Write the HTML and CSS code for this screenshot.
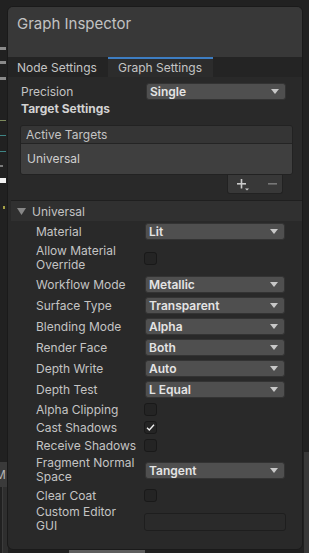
FILE: index.html
```html
<!DOCTYPE html>
<html>
<head>
<meta charset="utf-8">
<title>Graph Inspector</title>
<link rel="stylesheet" href="styles.css">
</head>
<body>
  <div class="graph-bits">
    <span class="bit bit-a"></span>
    <span class="bit bit-b"></span>
    <span class="bit bit-c"></span>
    <span class="bit bit-olive"></span>
    <span class="bit bit-teal1"></span>
    <span class="bit bit-teal2"></span>
    <span class="bit bit-d"></span>
    <span class="bit bit-white"></span>
    <span class="bit bit-yellow"></span>
    <span class="bit node-m">M</span>
    <span class="bit node-col"></span>
    <span class="bit node-right"></span>
    <span class="bit node-bottom"></span>
  </div>

  <div class="inspector">
    <div class="inspector-title">Graph Inspector</div>

    <div class="tabs">
      <div class="tab tab-node">Node Settings</div>
      <div class="tab tab-graph on">Graph Settings</div>
    </div>

    <div class="content">
      <div class="row row-top">
        <div class="label">Precision</div>
        <div class="popup"><span>Single</span><svg class="arrow" width="8" height="5" viewBox="0 0 8 5"><polygon points="0,0 8,0 4,5"/></svg></div>
      </div>
      <div class="heading">Target Settings</div>

      <div class="list">
        <div class="list-head">Active Targets</div>
        <div class="list-item">Universal</div>
      </div>
      <div class="list-foot">
        <svg class="btn-add" width="14" height="12" viewBox="0 0 14 12">
          <rect x="0" y="4" width="9" height="1.6"/>
          <rect x="3.7" y="0" width="1.6" height="9.5"/>
          <polygon points="8,9.5 12,9.5 10,11.5"/>
        </svg>
        <svg class="btn-remove" width="9" height="2" viewBox="0 0 9 2"><rect x="0" y="0" width="9" height="1.6"/></svg>
      </div>

      <div class="foldout">
        <div class="foldout-head">
          <svg class="fold-arrow" width="9" height="7" viewBox="0 0 9 7"><polygon points="0,0 9,0 4.5,7"/></svg>
          Universal
        </div>
        <div class="foldout-body">
          <div class="row">
            <div class="label">Material</div>
            <div class="popup"><span>Lit</span><svg class="arrow" width="8" height="5" viewBox="0 0 8 5"><polygon points="0,0 8,0 4,5"/></svg></div>
          </div>
          <div class="row row-tall">
            <div class="label">Allow Material<br>Override</div>
            <div class="check"></div>
          </div>
          <div class="row">
            <div class="label">Workflow Mode</div>
            <div class="popup"><span>Metallic</span><svg class="arrow" width="8" height="5" viewBox="0 0 8 5"><polygon points="0,0 8,0 4,5"/></svg></div>
          </div>
          <div class="row">
            <div class="label">Surface Type</div>
            <div class="popup"><span>Transparent</span><svg class="arrow" width="8" height="5" viewBox="0 0 8 5"><polygon points="0,0 8,0 4,5"/></svg></div>
          </div>
          <div class="row">
            <div class="label">Blending Mode</div>
            <div class="popup"><span>Alpha</span><svg class="arrow" width="8" height="5" viewBox="0 0 8 5"><polygon points="0,0 8,0 4,5"/></svg></div>
          </div>
          <div class="row">
            <div class="label">Render Face</div>
            <div class="popup"><span>Both</span><svg class="arrow" width="8" height="5" viewBox="0 0 8 5"><polygon points="0,0 8,0 4,5"/></svg></div>
          </div>
          <div class="row">
            <div class="label">Depth Write</div>
            <div class="popup"><span>Auto</span><svg class="arrow" width="8" height="5" viewBox="0 0 8 5"><polygon points="0,0 8,0 4,5"/></svg></div>
          </div>
          <div class="row">
            <div class="label">Depth Test</div>
            <div class="popup"><span>L Equal</span><svg class="arrow" width="8" height="5" viewBox="0 0 8 5"><polygon points="0,0 8,0 4,5"/></svg></div>
          </div>
          <div class="row row-check">
            <div class="label">Alpha Clipping</div>
            <div class="check"></div>
          </div>
          <div class="row row-check">
            <div class="label">Cast Shadows</div>
            <div class="check"><svg width="11" height="11" viewBox="0 0 11 11"><polyline points="2,5.8 4.3,8 9,2.8"/></svg></div>
          </div>
          <div class="row row-check">
            <div class="label">Receive Shadows</div>
            <div class="check"></div>
          </div>
          <div class="row row-tall">
            <div class="label">Fragment Normal<br>Space</div>
            <div class="popup"><span>Tangent</span><svg class="arrow" width="8" height="5" viewBox="0 0 8 5"><polygon points="0,0 8,0 4,5"/></svg></div>
          </div>
          <div class="row row-check">
            <div class="label">Clear Coat</div>
            <div class="check"></div>
          </div>
          <div class="row row-tall row-field">
            <div class="label">Custom Editor<br>GUI</div>
            <div class="field"></div>
          </div>
        </div>
      </div>
    </div>
  </div>
</body>
</html>
```

FILE: styles.css
```css
body
{
	margin: 0;
	padding: 6px 0 0 7px;
	background: #212121;
	font-family: Inter, "Noto Sans", "Liberation Sans", sans-serif;
	font-size: 12px;
	color: #c4c4c4;
}

/* bits of the shader graph behind the window */
.graph-bits
{
	position: absolute;
	left: 0;
	top: 0;
	width: 309px;
	height: 553px;
	overflow: hidden;
}
.bit
{
	position: absolute;
	display: block;
}
.bit-a { left: 0; top: 47px; width: 6px; height: 3px; background: #8a8a8a; }
.bit-b { left: 0; top: 61px; width: 6px; height: 3px; background: #8a8a8a; }
.bit-c { left: 0; top: 77px; width: 6px; height: 3px; background: #8a8a8a; }
.bit-olive { left: 0; top: 120px; width: 6px; height: 1px; background: #7d8a5c; }
.bit-teal1 { left: 0; top: 135px; width: 6px; height: 1px; background: #3e8585; }
.bit-teal2 { left: 0; top: 151px; width: 6px; height: 1px; background: #3e8585; }
.bit-d { left: 0; top: 165px; width: 3px; height: 2px; background: #7a7a7a; }
.bit-white { left: 0; top: 178px; width: 6px; height: 5px; background: #f2f2f2; }
.bit-yellow { left: 3px; top: 206px; width: 2px; height: 3px; background: #a5a046; }
.node-m
{
	left: 0;
	top: 462px;
	width: 7px;
	height: 25px;
	background: #3a3a3a;
	color: #b4b4b4;
	font-size: 12px;
	line-height: 25px;
	text-indent: -5px;
	overflow: hidden;
}
.node-col { left: 2px; top: 487px; width: 5px; height: 66px; background: #2e2e2e; border-left: 1px solid #3c3c3c; }
.node-right { left: 304px; top: 452px; width: 5px; height: 101px; background: #383838; }
.node-bottom { left: 69px; top: 550px; width: 76px; height: 3px; background: #5e5e5e; }

.inspector
{
	position: relative;
	box-sizing: border-box;
	width: 296px;
	height: 544px;
	border: 1px solid #1a1a1a;
	border-radius: 6px;
	overflow: hidden;
	background: #292929;
}

.inspector-title
{
	height: 50px;
	box-sizing: border-box;
	padding: 8px 0 0 9px;
	background: #383838;
	font-size: 15px;
	line-height: 18px;
	color: #c2c2c2;
}

.tabs
{
	display: flex;
	height: 20px;
	background: #242424;
}
.tab
{
	box-sizing: border-box;
	height: 20px;
	line-height: 21px;
	color: #c4c4c4;
	white-space: nowrap;
}
.tab-node
{
	width: 100px;
	padding-left: 9px;
}
.tab-graph
{
	width: 105px;
	padding-left: 10px;
}
.tab.on
{
	background: #2c2c2c;
	box-shadow: inset 0 2px 0 #3d7dc2;
}

.content
{
	padding-top: 4px;
}

.row
{
	display: flex;
	align-items: center;
	height: 21px;
}
.row-check
{
	height: 18px;
}
.row-tall
{
	height: 32px;
}
.row-tall .label
{
	line-height: 14px;
}
.label
{
	flex: none;
	width: 108px;
	white-space: nowrap;
}
.row-top
{
	padding-left: 13px;
}
.row-top .label
{
	width: 124px;
}

.popup
{
	display: flex;
	align-items: center;
	justify-content: space-between;
	box-sizing: border-box;
	width: 140px;
	height: 17px;
	margin-left: 1px;
	padding: 0 6px 0 3px;
	background: #4f4f4f;
	border: 1px solid #333333;
	border-radius: 3px;
	font-weight: 600;
	color: #e4e4e4;
}
.arrow
{
	fill: #c8c8c8;
}

.check
{
	box-sizing: border-box;
	width: 13px;
	height: 13px;
	border: 1px solid #191919;
	border-radius: 3px;
	background: #242424;
}
.check svg
{
	display: block;
	fill: none;
	stroke: #f0f0f0;
	stroke-width: 1.4;
}

.heading
{
	padding-left: 13px;
	height: 14px;
	line-height: 14px;
	font-weight: 700;
	color: #d2d2d2;
}

.list
{
	width: 273px;
	margin: 9px 0 0 12px;
	box-sizing: border-box;
	border: 1px solid #222222;
	border-radius: 3px;
	overflow: hidden;
}
.list-head
{
	height: 17px;
	line-height: 17px;
	padding-left: 5px;
	background: #353535;
	border-bottom: 1px solid #242424;
}
.list-item
{
	height: 30px;
	line-height: 29px;
	padding-left: 6px;
	background: #3f3f3f;
	color: #cfcfcf;
}
.list-foot
{
	display: flex;
	align-items: center;
	box-sizing: border-box;
	width: 56px;
	height: 19px;
	margin: 0 0 0 219px;
	padding-left: 9px;
	gap: 17px;
	background: #383838;
	border: 1px solid #222222;
	border-top: none;
	border-radius: 0 0 3px 3px;
}
.btn-add
{
	fill: #cacaca;
	margin-top: 2px;
}
.btn-remove
{
	fill: #777777;
}

.foldout
{
	margin: 6px 0 0 3px;
	border-top: 1px solid #1f1f1f;
}
.foldout-head
{
	display: flex;
	align-items: center;
	height: 20px;
	padding-left: 6px;
	background: #303030;
	color: #c4c4c4;
}
.fold-arrow
{
	fill: #878787;
	margin-right: 6px;
}
.foldout-body
{
	padding-left: 25px;
}

.row-field
{
	align-items: flex-start;
	height: 36px;
}
.row-field .label
{
	padding-top: 1px;
}
.field
{
	box-sizing: border-box;
	width: 142px;
	height: 18px;
	margin-top: 9px;
	background: #2a2a2a;
	border: 1px solid #1e1e1e;
	border-radius: 3px;
}
```
